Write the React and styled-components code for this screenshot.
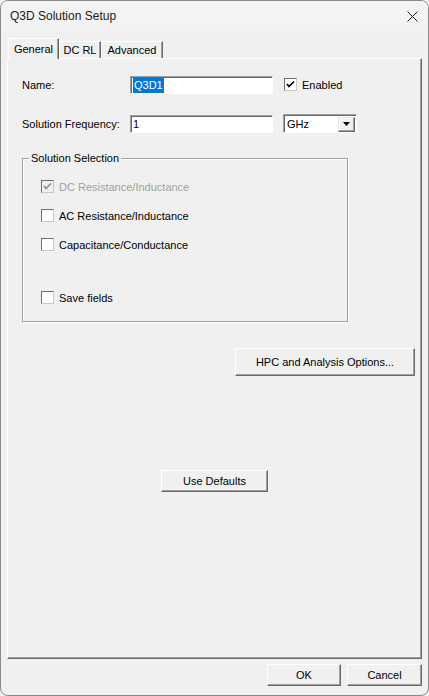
import React from "react";
import styled, { createGlobalStyle } from "styled-components";

const Global = createGlobalStyle`
  html, body { margin: 0; padding: 0; background: #f0f0f0; }
  body { font-family: "Liberation Sans", Arial, sans-serif; }
  * { box-sizing: border-box; }
`;

const Window = styled.div`
  width: 429px;
  height: 696px;
  border: 1px solid #8a8a8a;
  border-radius: 8px;
  background: #f0f0f0;
  overflow: hidden;
  display: flex;
  flex-direction: column;
  font-family: "Liberation Sans", Arial, sans-serif;
  font-size: 11px;
  color: #000;
`;

const TitleBar = styled.div`
  height: 30px;
  flex: none;
  background: #f3f3f3;
  display: flex;
  align-items: center;
  justify-content: space-between;
  padding-left: 9px;
`;

const Title = styled.span`
  font-family: "Segoe UI", "Liberation Sans", Arial, sans-serif;
  font-size: 12px;
  color: #1b1b1b;
`;

const CloseBtn = styled.div`
  width: 32px;
  height: 30px;
  display: flex;
  align-items: center;
  justify-content: center;
`;

const Body = styled.div`
  flex: 1;
  display: flex;
  flex-direction: column;
  padding: 7px 6px 0 6px;
`;

const TabRow = styled.div`
  height: 20px;
  display: flex;
  align-items: flex-end;
  padding-left: 1px;
  position: relative;
  z-index: 1;
`;

const Tab = styled.div`
  width: ${(p) => p.$w}px;
  height: ${(p) => (p.$active ? 21 : 17)}px;
  margin-bottom: ${(p) => (p.$active ? -1 : 0)}px;
  background: #f0f0f0;
  border-top: 1px solid #fff;
  border-left: 1px solid #fff;
  border-right: 1px solid #696969;
  box-shadow: inset -1px 0 0 #a0a0a0;
  display: flex;
  align-items: ${(p) => (p.$active ? "flex-start" : "center")};
  padding-top: ${(p) => (p.$active ? 4 : 0)}px;
  justify-content: center;
  font-size: 11px;
  white-space: nowrap;
`;

const Panel = styled.div`
  height: 601px;
  flex: none;
  border-top: 1px solid #fff;
  border-left: 1px solid #fff;
  border-right: 1px solid #696969;
  border-bottom: 1px solid #696969;
  box-shadow: inset -1px -1px 0 #a0a0a0;
  display: flex;
  flex-direction: column;
  padding: 16px 0 0 14px;
`;

const Row = styled.div`
  height: 19px;
  display: flex;
  align-items: center;
  margin-top: ${(p) => p.$mt || 0}px;
`;

const Label = styled.span`
  width: 108px;
  flex: none;
  white-space: nowrap;
`;

const TextBox = styled.div`
  width: 143px;
  height: 18px;
  background: #fff;
  border-top: 1px solid #a0a0a0;
  border-left: 1px solid #a0a0a0;
  border-right: 1px solid #fff;
  border-bottom: 1px solid #fff;
  box-shadow: inset 1px 1px 0 #696969;
  display: flex;
  align-items: center;
  padding-left: 2px;
  padding-top: 1px;
`;

const Selected = styled.span`
  background: #0078d7;
  color: #fff;
  padding: 1px 1px;
  line-height: 13px;
`;

const CheckWrap = styled.label`
  display: flex;
  align-items: center;
  gap: 5px;
  margin-left: ${(p) => p.$ml || 0}px;
  color: ${(p) => (p.$disabled ? "#a0a0a0" : "#000")};
  white-space: nowrap;
`;

const Box = styled.span`
  width: 13px;
  height: 13px;
  flex: none;
  background: ${(p) => (p.$disabled ? "#f0f0f0" : "#fff")};
  border-top: 1px solid #6e6e6e;
  border-left: 1px solid #6e6e6e;
  border-right: 1px solid #c8c8c8;
  border-bottom: 1px solid #c8c8c8;
  display: flex;
  align-items: center;
  justify-content: center;
`;

const Select = styled.div`
  width: 74px;
  height: 19px;
  margin-left: 10px;
  background: #fff;
  border-top: 1px solid #a0a0a0;
  border-left: 1px solid #a0a0a0;
  border-right: 1px solid #fff;
  border-bottom: 1px solid #fff;
  box-shadow: inset 1px 1px 0 #696969;
  display: flex;
  align-items: center;
  padding: 2px 1px 1px 3px;
`;

const SelectText = styled.span`
  flex: 1;
`;

const DropBtn = styled.span`
  width: 17px;
  height: 15px;
  background: #f0f0f0;
  border-top: 1px solid #e3e3e3;
  border-left: 1px solid #e3e3e3;
  border-right: 1px solid #696969;
  border-bottom: 1px solid #696969;
  box-shadow: inset -1px -1px 0 #a0a0a0, inset 1px 1px 0 #fff;
  display: flex;
  align-items: center;
  justify-content: center;
`;

const Group = styled.fieldset`
  width: 326px;
  margin: 19px 0 0 0;
  padding: 0 6px;
  border: 1px solid #a0a0a0;
  box-shadow: inset 1px 1px 0 #fff, 1px 1px 0 #fff;
  min-width: 0;
`;

const Legend = styled.legend`
  padding: 0 2px;
  line-height: 13px;
  font-size: 11px;
  background: #f0f0f0;
`;

const GroupBody = styled.div`
  display: flex;
  flex-direction: column;
  padding: 15px 0 17px 12px;
`;

const CheckRow = styled.div`
  height: 13px;
  display: flex;
  align-items: center;
  margin-top: ${(p) => p.$mt || 0}px;
`;

const Button = styled.div`
  width: ${(p) => p.$w}px;
  height: ${(p) => p.$h}px;
  flex: none;
  background: #f0f0f0;
  border-top: 1px solid #fff;
  border-left: 1px solid #fff;
  border-right: 1px solid #696969;
  border-bottom: 1px solid #696969;
  box-shadow: inset -1px -1px 0 #a0a0a0;
  display: flex;
  align-items: center;
  justify-content: center;
  font-size: 11px;
  color: #000;
  white-space: nowrap;
`;

const HpcButton = styled(Button)`
  align-self: flex-end;
  margin-top: 26px;
  margin-right: 6px;
`;

const DefaultsButton = styled(Button)`
  align-self: center;
  margin-top: 94px;
  margin-left: -14px;
`;

const Footer = styled.div`
  display: flex;
  justify-content: flex-end;
  gap: 6px;
  padding-top: 5px;
`;

const Check = ({ color = "#000" }) => (
  <svg width="9" height="9" viewBox="0 0 9 9">
    <polyline points="1,4 3,6.5 8,1.5" fill="none" stroke={color} strokeWidth="1.7" />
  </svg>
);

const Checkbox = ({ checked, disabled, label, ml }) => (
  <CheckWrap $disabled={disabled} $ml={ml}>
    <Box $disabled={disabled}>{checked && <Check color={disabled ? "#8d8d8d" : "#000"} />}</Box>
    <span>{label}</span>
  </CheckWrap>
);

export default function App() {
  return (
    <>
      <Global />
      <Window>
        <TitleBar>
          <Title>Q3D Solution Setup</Title>
          <CloseBtn>
            <svg width="11" height="11" viewBox="0 0 11 11">
              <path d="M0.5 0.5 L10.5 10.5 M10.5 0.5 L0.5 10.5" stroke="#1b1b1b" strokeWidth="1" />
            </svg>
          </CloseBtn>
        </TitleBar>
        <Body>
          <TabRow>
            <Tab $active $w={51}>General</Tab>
            <Tab $w={42}>DC RL</Tab>
            <Tab $w={62}>Advanced</Tab>
          </TabRow>
          <Panel>
            <Row>
              <Label>Name:</Label>
              <TextBox>
                <Selected>Q3D1</Selected>
              </TextBox>
              <Checkbox checked label="Enabled" ml={11} />
            </Row>
            <Row $mt={20}>
              <Label>Solution Frequency:</Label>
              <TextBox>1</TextBox>
              <Select>
                <SelectText>GHz</SelectText>
                <DropBtn>
                  <svg width="7" height="4" viewBox="0 0 7 4">
                    <path d="M0 0 H7 L3.5 4 Z" fill="#000" />
                  </svg>
                </DropBtn>
              </Select>
            </Row>
            <Group>
              <Legend>Solution Selection</Legend>
              <GroupBody>
                <CheckRow>
                  <Checkbox checked disabled label="DC Resistance/Inductance" />
                </CheckRow>
                <CheckRow $mt={16}>
                  <Checkbox label="AC Resistance/Inductance" />
                </CheckRow>
                <CheckRow $mt={16}>
                  <Checkbox label="Capacitance/Conductance" />
                </CheckRow>
                <CheckRow $mt={40}>
                  <Checkbox label="Save fields" />
                </CheckRow>
              </GroupBody>
            </Group>
            <HpcButton $w={180} $h={28}>HPC and Analysis Options...</HpcButton>
            <DefaultsButton $w={107} $h={22}>Use Defaults</DefaultsButton>
          </Panel>
          <Footer>
            <Button $w={74} $h={22}>OK</Button>
            <Button $w={75} $h={22}>Cancel</Button>
          </Footer>
        </Body>
      </Window>
    </>
  );
}
